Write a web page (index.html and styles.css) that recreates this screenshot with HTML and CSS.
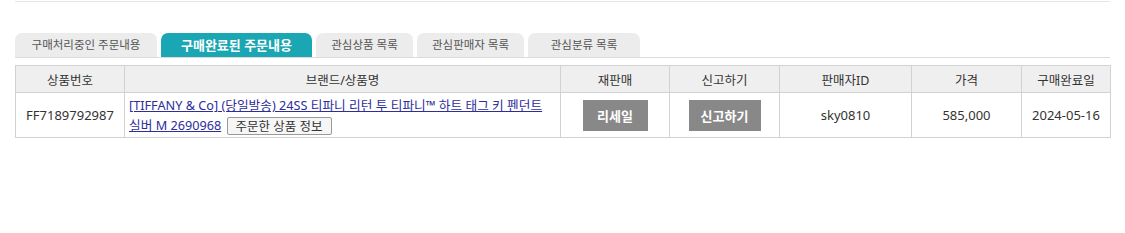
FILE: index.html
```html
<!DOCTYPE html>
<html lang="ko">
<head>
<meta charset="utf-8">
<link rel="stylesheet" href="styles.css">
</head>
<body>
<div class="wrap">
  <div class="topbox"></div>
  <ul class="tabs">
    <li class="tab t1">구매처리중인 주문내용</li>
    <li class="tab t2 active">구매완료된 주문내용</li>
    <li class="tab t3">관심상품 목록</li>
    <li class="tab t4">관심판매자 목록</li>
    <li class="tab t5">관심분류 목록</li>
  </ul>
  <table class="orders">
    <colgroup>
      <col class="c1"><col class="c2"><col class="c3"><col class="c4"><col class="c5"><col class="c6"><col class="c7">
    </colgroup>
    <thead>
      <tr>
        <th>상품번호</th>
        <th>브랜드/상품명</th>
        <th>재판매</th>
        <th>신고하기</th>
        <th>판매자ID</th>
        <th>가격</th>
        <th>구매완료일</th>
      </tr>
    </thead>
    <tbody>
      <tr>
        <td>FF7189792987</td>
        <td class="name"><a href="#">[TIFFANY &amp; Co] (당일발송) 24SS 티파니 리턴 투 티파니™ 하트 태그 키 펜던트 실버 M 2690968</a> <button class="info">주문한 상품 정보</button></td>
        <td><button class="gray">리세일</button></td>
        <td><button class="gray wide">신고하기</button></td>
        <td>sky0810</td>
        <td>585,000</td>
        <td>2024-05-16</td>
      </tr>
    </tbody>
  </table>
</div>
</body>
</html>
```
FILE: styles.css
```css
html, body {
  margin: 0;
  padding: 0;
  background: #fff;
}
body {
  font-family: "Noto Sans", "Noto Sans CJK KR", sans-serif;
  color: #333;
}
.wrap {
  margin-left: 15px;
  width: 1095px;
}
.topbox {
  height: 1px;
  border-bottom: 1px solid #e6e6e6;
}
.tabs {
  list-style: none;
  margin: 31px 0 0 0;
  padding: 0;
  display: flex;
  gap: 4px;
  border-bottom: 1px solid #dcdcdc;
  height: 24px;
}
.tab {
  height: 24px;
  box-sizing: border-box;
  background: #ececec;
  border-radius: 7px 7px 0 0;
  color: #555;
  font-size: 11.5px;
  line-height: 24px;
  text-align: center;
  white-space: nowrap;
}
.t1 { width: 142px; }
.t2 { width: 151px; }
.t3 { width: 97px; }
.t4 { width: 107px; }
.t5 { width: 112px; }
.tab.active {
  background: #1ba6b3;
  color: #fff;
  font-weight: bold;
  font-size: 13px;
}
.orders {
  margin-top: 7px;
  width: 1095px;
  border-collapse: collapse;
  table-layout: fixed;
  font-size: 12.5px;
}
.c1 { width: 109px; }
.c2 { width: 436px; }
.c3 { width: 109px; }
.c4 { width: 110px; }
.c5 { width: 132px; }
.c6 { width: 110px; }
.c7 { width: 89px; }
.orders th, .orders td {
  border: 1px solid #d2d2d2;
  text-align: center;
  color: #333;
}
.orders th {
  background: #efefef;
  font-weight: normal;
  height: 26px;
  padding: 0;
}
.orders td {
  height: 44px;
  padding: 0 4px;
  font-size: 13px;
}
.orders td.name {
  text-align: left;
  padding: 0 4px 0 4px;
  line-height: 20px;
  word-break: keep-all;
  font-size: 12.7px;
}
.name a {
  color: #2d2d9b;
  text-decoration: underline;
}
.info {
  font-family: inherit;
  font-size: 12.5px;
  color: #333;
  background: #f6f6f6;
  border: 1px solid #999;
  border-radius: 2px;
  padding: 0 8px;
  height: 18px;
  line-height: 15px;
  vertical-align: middle;
  margin-left: 2px;
}
.gray {
  font-family: inherit;
  background: #888;
  color: #fff;
  border: none;
  font-size: 13px;
  font-weight: bold;
  width: 65px;
  height: 31px;
  padding: 0;
}
.gray.wide { width: 72px; }
```
